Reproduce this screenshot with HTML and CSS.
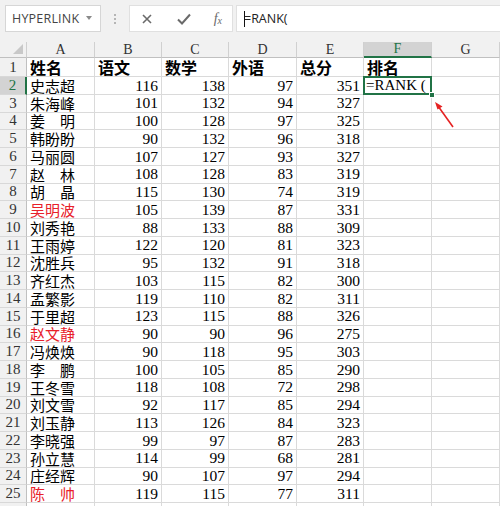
FILE: index.html
```html
<!DOCTYPE html>
<html>
<head>
<meta charset="utf-8">
<link rel="stylesheet" href="styles.css">
</head>
<body>
<div class="toolbar">
  <div class="namebox"><span class="nb-text">HYPERLINK</span><span class="nb-arrow"></span></div>
  <div class="dots"><i></i><i></i><i></i></div>
  <div class="btns">
    <svg class="ic" width="14" height="14" viewBox="0 0 14 14"><path d="M3 3 L11 11 M11 3 L3 11" stroke="#6a6a6a" stroke-width="1.6" fill="none"/></svg>
    <svg class="ic" width="16" height="14" viewBox="0 0 16 14"><path d="M2 7.5 L6 11.5 L14 2.5" stroke="#6a6a6a" stroke-width="2" fill="none"/></svg>
    <span class="fx">f<sub>x</sub></span>
  </div>
  <div class="formula"><span class="caret"></span>=RANK(</div>
</div>
<div class="sheet">
  <div class="corner"><span class="tri"></span></div>
  <div class="ch">A</div><div class="ch">B</div><div class="ch">C</div><div class="ch">D</div><div class="ch">E</div><div class="ch sel-h">F</div><div class="ch">G</div>

  <div class="rh">1</div><div class="c hd">姓名</div><div class="c hd">语文</div><div class="c hd">数学</div><div class="c hd">外语</div><div class="c hd">总分</div><div class="c hd">排名</div><div class="c"></div>
  <div class="rh sel-r">2</div><div class="c t">史志超</div><div class="c n">116</div><div class="c n">138</div><div class="c n">97</div><div class="c n">351</div><div class="c active">=RANK&nbsp;(<span class="handle"></span></div><div class="c"></div>
  <div class="rh">3</div><div class="c t">朱海峰</div><div class="c n">101</div><div class="c n">132</div><div class="c n">94</div><div class="c n">327</div><div class="c"></div><div class="c"></div>
  <div class="rh">4</div><div class="c t">姜　明</div><div class="c n">100</div><div class="c n">128</div><div class="c n">97</div><div class="c n">325</div><div class="c"></div><div class="c"></div>
  <div class="rh">5</div><div class="c t">韩盼盼</div><div class="c n">90</div><div class="c n">132</div><div class="c n">96</div><div class="c n">318</div><div class="c"></div><div class="c"></div>
  <div class="rh">6</div><div class="c t">马丽圆</div><div class="c n">107</div><div class="c n">127</div><div class="c n">93</div><div class="c n">327</div><div class="c"></div><div class="c"></div>
  <div class="rh">7</div><div class="c t">赵　林</div><div class="c n">108</div><div class="c n">128</div><div class="c n">83</div><div class="c n">319</div><div class="c"></div><div class="c"></div>
  <div class="rh">8</div><div class="c t">胡　晶</div><div class="c n">115</div><div class="c n">130</div><div class="c n">74</div><div class="c n">319</div><div class="c"></div><div class="c"></div>
  <div class="rh">9</div><div class="c t red">吴明波</div><div class="c n">105</div><div class="c n">139</div><div class="c n">87</div><div class="c n">331</div><div class="c"></div><div class="c"></div>
  <div class="rh">10</div><div class="c t">刘秀艳</div><div class="c n">88</div><div class="c n">133</div><div class="c n">88</div><div class="c n">309</div><div class="c"></div><div class="c"></div>
  <div class="rh">11</div><div class="c t">王雨婷</div><div class="c n">122</div><div class="c n">120</div><div class="c n">81</div><div class="c n">323</div><div class="c"></div><div class="c"></div>
  <div class="rh">12</div><div class="c t">沈胜兵</div><div class="c n">95</div><div class="c n">132</div><div class="c n">91</div><div class="c n">318</div><div class="c"></div><div class="c"></div>
  <div class="rh">13</div><div class="c t">齐红杰</div><div class="c n">103</div><div class="c n">115</div><div class="c n">82</div><div class="c n">300</div><div class="c"></div><div class="c"></div>
  <div class="rh">14</div><div class="c t">孟繁影</div><div class="c n">119</div><div class="c n">110</div><div class="c n">82</div><div class="c n">311</div><div class="c"></div><div class="c"></div>
  <div class="rh">15</div><div class="c t">于里超</div><div class="c n">123</div><div class="c n">115</div><div class="c n">88</div><div class="c n">326</div><div class="c"></div><div class="c"></div>
  <div class="rh">16</div><div class="c t red">赵文静</div><div class="c n">90</div><div class="c n">90</div><div class="c n">96</div><div class="c n">275</div><div class="c"></div><div class="c"></div>
  <div class="rh">17</div><div class="c t">冯焕焕</div><div class="c n">90</div><div class="c n">118</div><div class="c n">95</div><div class="c n">303</div><div class="c"></div><div class="c"></div>
  <div class="rh">18</div><div class="c t">李　鹏</div><div class="c n">100</div><div class="c n">105</div><div class="c n">85</div><div class="c n">290</div><div class="c"></div><div class="c"></div>
  <div class="rh">19</div><div class="c t">王冬雪</div><div class="c n">118</div><div class="c n">108</div><div class="c n">72</div><div class="c n">298</div><div class="c"></div><div class="c"></div>
  <div class="rh">20</div><div class="c t">刘文雪</div><div class="c n">92</div><div class="c n">117</div><div class="c n">85</div><div class="c n">294</div><div class="c"></div><div class="c"></div>
  <div class="rh">21</div><div class="c t">刘玉静</div><div class="c n">113</div><div class="c n">126</div><div class="c n">84</div><div class="c n">323</div><div class="c"></div><div class="c"></div>
  <div class="rh">22</div><div class="c t">李晓强</div><div class="c n">99</div><div class="c n">97</div><div class="c n">87</div><div class="c n">283</div><div class="c"></div><div class="c"></div>
  <div class="rh">23</div><div class="c t">孙立慧</div><div class="c n">114</div><div class="c n">99</div><div class="c n">68</div><div class="c n">281</div><div class="c"></div><div class="c"></div>
  <div class="rh">24</div><div class="c t">庄经辉</div><div class="c n">90</div><div class="c n">107</div><div class="c n">97</div><div class="c n">294</div><div class="c"></div><div class="c"></div>
  <div class="rh">25</div><div class="c t red">陈　帅</div><div class="c n">119</div><div class="c n">115</div><div class="c n">77</div><div class="c n">311</div><div class="c"></div><div class="c"></div>
  <div class="rh"></div><div class="c"></div><div class="c"></div><div class="c"></div><div class="c"></div><div class="c"></div><div class="c"></div><div class="c"></div>

  <svg class="arrow" width="40" height="40" viewBox="0 0 40 40">
    <path d="M21 30 L6 9" stroke="#e52222" stroke-width="1.6" fill="none"/>
    <path d="M3 5 L10.5 9.5 L5.5 12.5 Z" fill="#e52222"/>
  </svg>
</div>
</body>
</html>
```

FILE: styles.css
```css
* { box-sizing: border-box; }
html, body { margin: 0; padding: 0; }
body {
  width: 500px;
  height: 506px;
  overflow: hidden;
  background: #ffffff;
  font-family: "Noto Sans CJK SC", "Noto Sans", sans-serif;
}
.toolbar {
  height: 42px;
  background: #f1f1f1;
  display: flex;
  align-items: flex-start;
  padding-top: 5px;
  padding-left: 5px;
}
.namebox {
  width: 96px;
  height: 27px;
  background: #fff;
  border: 1px solid #d6d6d6;
  display: flex;
  align-items: center;
  justify-content: space-between;
  padding: 0 8px 0 6px;
}
.nb-text {
  font-family: "Open Sans", "Noto Sans", sans-serif;
  font-size: 12.5px;
  color: #444;
  letter-spacing: 0.2px;
}
.nb-arrow {
  width: 0; height: 0;
  border-left: 3.5px solid transparent;
  border-right: 3.5px solid transparent;
  border-top: 4px solid #8a8a8a;
  margin-bottom: 2px;
}
.dots {
  width: 28px;
  height: 27px;
  display: flex;
  flex-direction: column;
  align-items: center;
  justify-content: center;
  gap: 2px;
}
.dots i {
  width: 2px; height: 2px;
  background: #b5b5b5;
  display: block;
}
.btns {
  width: 104px;
  height: 27px;
  background: #fff;
  border: 1px solid #e0e0e0;
  display: flex;
  align-items: center;
  justify-content: space-between;
  padding: 0 10px 0 10px;
}
.ic { display: block; }
.fx {
  font-family: "Liberation Serif", serif;
  font-style: italic;
  font-size: 14px;
  color: #6a6a6a;
  line-height: 1;
}
.fx sub { font-size: 10px; vertical-align: -1px; }
.formula {
  flex: 1;
  height: 27px;
  margin-left: 3px;
  background: #fff;
  border: 1px solid #e0e0e0;
  border-right: none;
  display: flex;
  align-items: center;
  padding-left: 7px;
  font-family: "Open Sans", "Noto Sans", sans-serif;
  font-size: 12.5px;
  color: #222;
  position: relative;
}
.caret {
  position: absolute;
  left: 7px;
  top: 5px;
  width: 1px;
  height: 16px;
  background: #111;
}

.sheet {
  position: relative;
  display: grid;
  grid-template-columns: 27px 68px 67px 67px 68px 67px 68px 68px;
  grid-template-rows: 16px 19px repeat(25, 17.76px);
}
.corner {
  background: #f1f1f1;
  border-right: 1px solid #cfcfcf;
  border-bottom: 1px solid #c0c0c0;
  position: relative;
}
.tri {
  position: absolute;
  right: 3px;
  bottom: 3px;
  width: 0; height: 0;
  border-left: 10px solid transparent;
  border-bottom: 10px solid #c8c8c8;
}
.ch {
  background: #f1f1f1;
  border-right: 1px solid #d0d0d0;
  border-bottom: 1px solid #c0c0c0;
  font-family: "Liberation Serif", serif;
  font-size: 14px;
  color: #333;
  display: flex;
  align-items: center;
  justify-content: center;
  line-height: 1;
}
.ch.sel-h {
  background: #d3d3d3;
  color: #217346;
  border-bottom: 2px solid #217346;
}
.rh {
  background: #f1f1f1;
  border-right: 1px solid #c0c0c0;
  border-bottom: 1px solid #d8d8d8;
  font-family: "Liberation Serif", serif;
  font-size: 15px;
  color: #333;
  display: flex;
  align-items: center;
  justify-content: center;
  line-height: 1;
}
.rh.sel-r {
  background: #d3d3d3;
  color: #217346;
  border-right: 2px solid #217346;
}
.c {
  border-right: 1px solid #dadada;
  border-bottom: 1px solid #dadada;
  display: flex;
  align-items: center;
  line-height: 1;
  white-space: nowrap;
  overflow: visible;
  color: #000;
}
.c.hd {
  font-family: "Noto Sans CJK SC", sans-serif;
  font-weight: 700;
  font-size: 16px;
  padding-left: 3px;
}
.c.t {
  font-family: "Noto Sans CJK SC", sans-serif;
  font-size: 15px;
  padding-left: 3px;
}
.c.red { color: #e8202a; }
.c.n {
  font-family: "Liberation Serif", serif;
  font-size: 15.5px;
  justify-content: flex-end;
  padding-right: 3px;
}
.c.active {
  position: relative;
  font-family: "Liberation Serif", serif;
  font-size: 15px;
  padding-left: 2px;
}
.c.active::before {
  content: "";
  position: absolute;
  left: -1px;
  top: -1px;
  right: -1px;
  bottom: -1px;
  border: 2px solid #217346;
}
.handle {
  position: absolute;
  right: -4px;
  bottom: -4px;
  width: 6px;
  height: 6px;
  background: #217346;
  border: 1px solid #fff;
  z-index: 2;
}
.arrow {
  position: absolute;
  left: 432px;
  top: 55px;
}
```
